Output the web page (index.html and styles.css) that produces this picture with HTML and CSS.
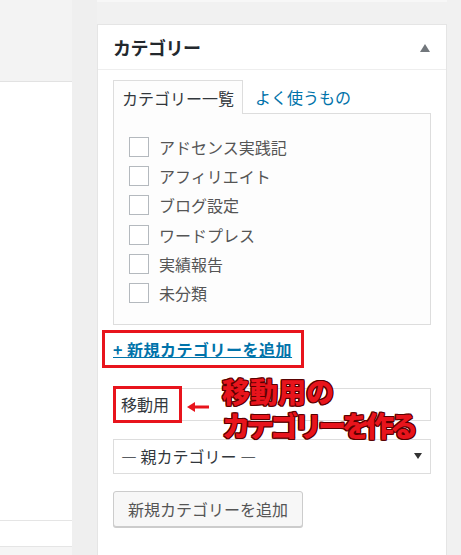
FILE: index.html
```html
<!DOCTYPE html>
<html lang="ja">
<head>
<meta charset="utf-8">
<title>カテゴリー</title>
<link rel="stylesheet" href="styles.css">
</head>
<body>
<div class="page">
  <div class="left-col">
    <div class="left-top"></div>
    <div class="left-panel"></div>
    <div class="left-row"></div>
    <div class="left-bottom"></div>
  </div>
  <div class="gutter"></div>
  <div class="right-col">
    <div class="prev-box"></div>
    <div class="postbox">
      <div class="postbox-head">
        <h2 class="postbox-title">カテゴリー</h2>
        <span class="toggle"></span>
      </div>
      <div class="postbox-inside">
        <ul class="tabs">
          <li class="tab tab-active">カテゴリー一覧</li>
          <li class="tab tab-link">よく使うもの</li>
        </ul>
        <ul class="cat-list">
          <li class="cat-item"><span class="checkbox"></span><span>アドセンス実践記</span></li>
          <li class="cat-item"><span class="checkbox"></span><span>アフィリエイト</span></li>
          <li class="cat-item"><span class="checkbox"></span><span>ブログ設定</span></li>
          <li class="cat-item"><span class="checkbox"></span><span>ワードプレス</span></li>
          <li class="cat-item"><span class="checkbox"></span><span>実績報告</span></li>
          <li class="cat-item"><span class="checkbox"></span><span>未分類</span></li>
        </ul>
        <div class="add-link-box"><a class="add-link" href="#">+ 新規カテゴリーを追加</a></div>
        <div class="new-cat">
          <div class="text-input">移動用</div>
          <span class="mark-box"></span>
          <svg class="mark-arrow" width="22" height="10" viewBox="0 0 22 10"><polygon points="0,5 8,0 8,10" fill="#e8141c"/><rect x="7" y="3.5" width="15" height="3" fill="#e8141c"/></svg>
          <div class="note"><div class="note-l1">移動用の</div><div class="note-l2">カテゴリーを作る</div></div>
        </div>
        <div class="select">
          <span>— 親カテゴリー —</span>
          <span class="select-arrow"></span>
        </div>
        <div class="button">新規カテゴリーを追加</div>
      </div>
    </div>
  </div>
</div>
</body>
</html>
```
FILE: styles.css
```css
* { box-sizing: border-box; }
html, body { margin: 0; padding: 0; }
body {
  background: #f1f1f1;
  font-family: "Noto Sans CJK JP", "Noto Sans", sans-serif;
  color: #32373c;
  width: 461px;
  height: 555px;
  overflow: hidden;
}
.page { display: flex; height: 555px; }
.left-col { width: 72px; display: flex; flex-direction: column; }
.left-top { height: 81px; background: #f3f3f3; }
.left-panel { height: 439px; background: #fff; border-top: 1px solid #e2e2e2; }
.left-row { height: 27px; background: #fff; border-top: 1px solid #e5e5e5; border-bottom: 1px solid #e5e5e5; }
.left-bottom { flex: 1; background: #f5f5f5; }
.gutter { width: 25px; background: #efefef; }
.right-col { width: 350px; display: flex; flex-direction: column; }
.prev-box { height: 2px; background: #f7f7f7; }
.postbox {
  margin-top: 22px;
  background: #fff;
  border: 1px solid #e5e5e5;
  border-bottom: none;
  flex: 1;
}
.postbox-head {
  height: 45px;
  border-bottom: 1px solid #eee;
  display: flex;
  align-items: center;
  justify-content: space-between;
  padding: 0 16px 0 15px;
}
.postbox-title {
  margin: 0;
  font-size: 18px;
  font-weight: 700;
  line-height: 24px;
  color: #23282d;
  letter-spacing: -0.5px;
}
.toggle {
  width: 0; height: 0;
  border-left: 5px solid transparent;
  border-right: 5px solid transparent;
  border-bottom: 8px solid #72777c;
  margin-top: 2px;
}
.postbox-inside { padding: 10px 15px 0 15px; }
.tabs { list-style: none; margin: 0; padding: 0; display: flex; align-items: flex-start; }
.tab { font-size: 16px; line-height: 24px; }
.tab-active {
  width: 130px;
  height: 34px;
  border: 1px solid #ddd;
  border-bottom: none;
  background: #fdfdfd;
  padding: 5px 0 0 8px;
  margin-bottom: -1px;
  position: relative;
  z-index: 1;
  color: #32373c;
}
.tab-link { margin-left: 12px; padding-top: 5px; color: #0073aa; }
.cat-list {
  list-style: none;
  margin: 0;
  padding: 18px 0 16px 15px;
  border: 1px solid #ddd;
  background: #fdfdfd;
  width: 318px;
}
.cat-item {
  height: 29.33px;
  display: flex;
  align-items: center;
  font-size: 16px;
  line-height: 22px;
  color: #555;
}
.checkbox {
  width: 20px; height: 20px;
  border: 1px solid #b4b9be;
  background: #fff;
  margin-right: 10px;
  flex: none;
}
.add-link-box {
  display: inline-block;
  margin: 5px 0 0 -11px;
  border: 3px solid #e8141c;
  padding: 4px 9px 4px 8px;
  height: 38px;
}
.add-link {
  font-size: 16px;
  font-weight: 700;
  line-height: 24px;
  color: #0073aa;
  text-decoration: underline;
  letter-spacing: 0.5px;
}
.new-cat { position: relative; margin-top: 20px; }
.text-input {
  width: 318px;
  height: 33px;
  border: 1px solid #ddd;
  background: #fff;
  font-size: 16px;
  line-height: 31px;
  padding-left: 7px;
  color: #32373c;
}
.mark-box {
  position: absolute;
  left: 0; top: -2px;
  width: 69px; height: 37px;
  border: 3px solid #e8141c;
}
.mark-arrow { position: absolute; left: 74px; top: 14px; }
.note {
  position: absolute;
  left: 109px; top: -14px;
  font-size: 28px;
  font-weight: 900;
  line-height: 34px;
  color: #e8141c;
  white-space: nowrap;
  text-shadow: 1px 0 0 #5a0000, -1px 0 0 #5a0000, 0 1px 0 #5a0000, 0 -1px 0 #5a0000, 1px 1px 0 #5a0000, -1px -1px 0 #5a0000, 1px -1px 0 #5a0000, -1px 1px 0 #5a0000;
}
.note-l2 { letter-spacing: -4px; }
.select {
  margin-top: 18px;
  width: 318px;
  height: 35px;
  border: 1px solid #ddd;
  background: #fff;
  display: flex;
  align-items: center;
  justify-content: space-between;
  padding: 0 8px 0 7px;
  font-size: 16px;
  line-height: 24px;
  color: #32373c;
}
.select-arrow {
  width: 0; height: 0;
  border-left: 4px solid transparent;
  border-right: 4px solid transparent;
  border-top: 6px solid #333;
}
.button {
  margin-top: 17px;
  width: 190px;
  height: 36px;
  border: 1px solid #ccc;
  border-radius: 3px;
  background: #f7f7f7;
  box-shadow: 0 1px 0 #ccc;
  font-size: 16px;
  line-height: 34px;
  text-align: center;
  color: #555;
}
```
